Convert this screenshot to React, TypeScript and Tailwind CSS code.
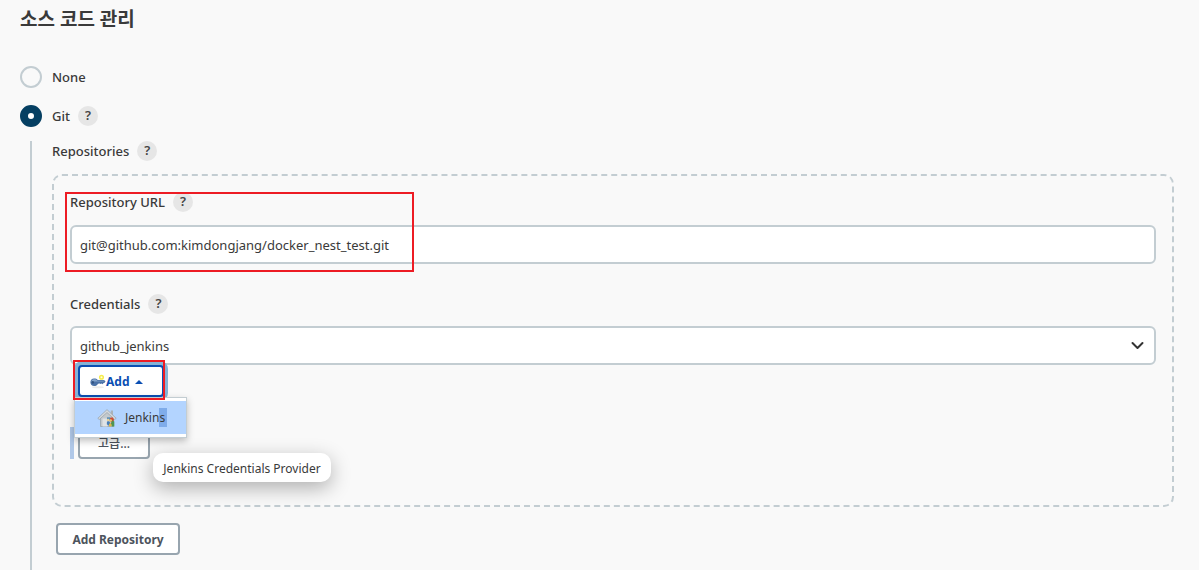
import { useState } from "react";
import type { ReactNode } from "react";

function Help({ topic }: { topic: string }) {
  return (
    <button
      type="button"
      title={`Help for feature: ${topic}`}
      className="flex size-5 items-center justify-center rounded-full bg-[#e6e6e6] text-[13px] font-semibold text-[#444]"
    >
      ?
    </button>
  );
}

function Radio({
  value,
  selected,
  onSelect,
}: {
  value: string;
  selected: string;
  onSelect: (value: string) => void;
}) {
  return (
    <label className="flex items-center gap-2.5 text-[13px] font-medium">
      <input
        type="radio"
        name="scm"
        value={value}
        checked={selected === value}
        onChange={() => onSelect(value)}
        className="size-[22px] appearance-none rounded-full border-2 border-[#c3cdd2] bg-[#f9f9f9] checked:border-8 checked:border-[#053f62] checked:bg-white"
      />
      <span className="pt-0.5">{value}</span>
    </label>
  );
}

function FieldLabel({ id, children }: { id: string; children: string }) {
  return (
    <div className="flex h-5 items-center gap-2">
      <label htmlFor={id} className="pt-0.5 text-[13px] font-medium">
        {children}
      </label>
      <Help topic={children} />
    </div>
  );
}

function Highlight({ className }: { className: string }) {
  return (
    <div
      className={`pointer-events-none absolute z-20 border-2 border-[#ed1c24] ${className}`}
    />
  );
}

function OutlineButton({
  className,
  children,
}: {
  className: string;
  children: ReactNode;
}) {
  return (
    <button
      type="button"
      className={`h-8 rounded border-2 border-[#98a5af] bg-white pt-0.5 text-xs text-[#4d545d] ${className}`}
    >
      {children}
    </button>
  );
}

function KeyIcon() {
  return (
    <svg width="16" height="16" viewBox="0 0 16 16" aria-hidden="true">
      <ellipse cx="8" cy="13.200" rx="6" ry="1" fill="#ececea" />
      <circle cx="11.500" cy="3.200" r="1.800" fill="#fffde0" stroke="#f5ec4e" strokeWidth="1.500" />
      <path
        d="M4 4.500c1.700 0 3 .5 3.700 1.400H14l1.500 1.400-.8 1.500-1.200.3-.6 1.100-1.300-.8-.9.500-.9-.5-1.800.3C7.300 11.300 5.900 12 4.200 12 1.900 12 .4 10.500.4 8.300S1.900 4.500 4 4.500z"
        fill="#4a71a6"
      />
      <path d="M1.300 7.300C1.900 5.900 2.900 5.300 4.200 5.300c1.400 0 2.400.4 3.100 1.400h6.500v.8H1.300z" fill="#83a3c9" />
      <ellipse cx="2.800" cy="8.400" rx="1.100" ry="1.300" fill="#31527f" />
    </svg>
  );
}

function HouseIcon() {
  return (
    <svg width="20" height="20" viewBox="0 0 20 20" aria-hidden="true">
      <path d="M3.500 9L10 3l6.500 6v9.500h-13z" fill="#c3c9cd" stroke="#949da4" strokeWidth=".7" />
      <path d="M13.800 2.500h2.200v5l-2.200-2z" fill="#aab2b8" />
      <path d="M.8 10.300L10 1.600l9.200 8.700-1.500 1.200L10 4.500l-7.700 7z" fill="#d3d8dc" stroke="#8d979e" strokeWidth=".6" />
      <path d="M5.500 10.500h5v8h-5z" fill="#dfe3e5" />
      <path d="M10 9.300h3.500v3H10z" fill="#5a8fb8" />
      <circle cx="11.200" cy="12" r="1.300" fill="#e8cf95" />
      <path d="M13 10l2.300-.8 1.700 2.300-.8 3.500-2.700-1z" fill="#cf4b32" />
      <circle cx="13.800" cy="12.500" r="1.200" fill="#e9c66c" />
      <path d="M10 13.500l2-.3 1.500 2-1.500 2.500-2.200-1.500z" fill="#477fb8" />
      <path d="M15 12.500l2.300 1v5h-2.500l-1-2.500z" fill="#4e9553" />
      <path d="M12 16l1.500-1 1.300 2-.8 1.500h-2z" fill="#dfb547" />
    </svg>
  );
}

export default function App() {
  const [scm, setScm] = useState("Git");
  const [url, setUrl] = useState("git@github.com:kimdongjang/docker_nest_test.git");

  return (
    <main className="flex min-h-screen flex-col bg-[#f9f9f9] pr-[25px] pl-5 font-['Noto_Sans','Noto_Sans_CJK_KR',sans-serif] text-[#3a3a3a]">
      <h1 className="text-[19px] leading-[38px] font-bold">소스 코드 관리</h1>

      <div className="mt-7 flex h-[22px] items-center">
        <Radio value="None" selected={scm} onSelect={setScm} />
      </div>
      <div className="mt-[17px] flex h-[22px] items-center gap-2">
        <Radio value="Git" selected={scm} onSelect={setScm} />
        <Help topic="Git" />
      </div>

      <section className="mt-3.5 ml-2.5 grow border-l-2 border-[#c3cdd2] pb-[15px] pl-5">
        <div className="flex h-5 items-center gap-2">
          <h2 className="pt-0.5 text-[13px] font-medium">Repositories</h2>
          <Help topic="Repositories" />
        </div>

        <div className="mt-[13px] rounded-[10px] border-2 border-dashed border-[#c3cdd2] px-4 pt-4 pb-[46px]">
          <div className="relative">
            <FieldLabel id="url">Repository URL</FieldLabel>
            <input
              id="url"
              type="text"
              value={url}
              onChange={(e) => setUrl(e.target.value)}
              className="mt-[13px] block h-[39px] w-full rounded-md border-2 border-[#c3cdd2] bg-white px-2 text-[13px]"
            />
            <Highlight className="top-0 -left-[5px] h-20 w-[349px]" />
          </div>

          <div className="mt-[30px]">
            <FieldLabel id="credentials">Credentials</FieldLabel>
            <div className="relative mt-3">
              <select
                id="credentials"
                className="block h-[39px] w-full appearance-none rounded-md border-2 border-[#c3cdd2] bg-white px-2 pt-0.5 text-[13px]"
              >
                <option>github_jenkins</option>
              </select>
              <svg
                className="pointer-events-none absolute top-3.5 right-3"
                width="13"
                height="11"
                viewBox="0 0 13 11"
                fill="none"
                stroke="#333"
                strokeWidth="2"
                strokeLinecap="round"
                strokeLinejoin="round"
                aria-hidden="true"
              >
                <path d="M1.500 3l5 5 5-5" />
              </svg>
            </div>
          </div>

          <div className="relative z-10 ml-2 w-[86px]">
            <button
              type="button"
              aria-expanded="true"
              className="flex h-8 w-full items-center rounded border-2 border-[#0b4fb3] bg-white pt-0.5 pl-2.5 text-xs font-bold text-[#0b4fb3] ring-4 ring-[#85b3d6]"
            >
              <KeyIcon />
              Add
              <svg className="ml-1.5" width="8" height="4" viewBox="0 0 8 4" aria-hidden="true">
                <path d="M0 4l4-4 4 4z" fill="#0b4fb3" />
              </svg>
            </button>
            <Highlight className="-top-[5px] -left-[5px] h-10 w-[92px]" />

            <div className="absolute top-8 -left-1 w-[113px] border border-[#c3cdd2] bg-white py-[3px] shadow-[0_3px_7px_rgba(0,0,0,0.25)]">
              <button
                type="button"
                className="flex h-[33px] w-full items-center gap-2 bg-[#b3d4ff] pl-[22px] text-xs"
              >
                <HouseIcon />
                <span>
                  Jenkin<span className="bg-[#7facea] py-px pr-0.5">s</span>
                </span>
              </button>
            </div>
            <div
              role="tooltip"
              className="absolute top-[88px] left-[75px] flex h-[29px] w-[178px] items-center justify-center rounded-[10px] bg-white pt-0.5 text-xs whitespace-nowrap shadow-[0_6px_20px_rgba(0,0,0,0.3)]"
            >
              Jenkins Credentials Provider
            </div>
          </div>

          <div className="mt-[30px] border-l-4 border-[#b0c8e8] pl-1">
            <OutlineButton className="block w-[72px] font-medium">고급...</OutlineButton>
          </div>
        </div>

        <OutlineButton className="mt-4 ml-1 w-[124px] font-bold">Add Repository</OutlineButton>
      </section>
    </main>
  );
}
